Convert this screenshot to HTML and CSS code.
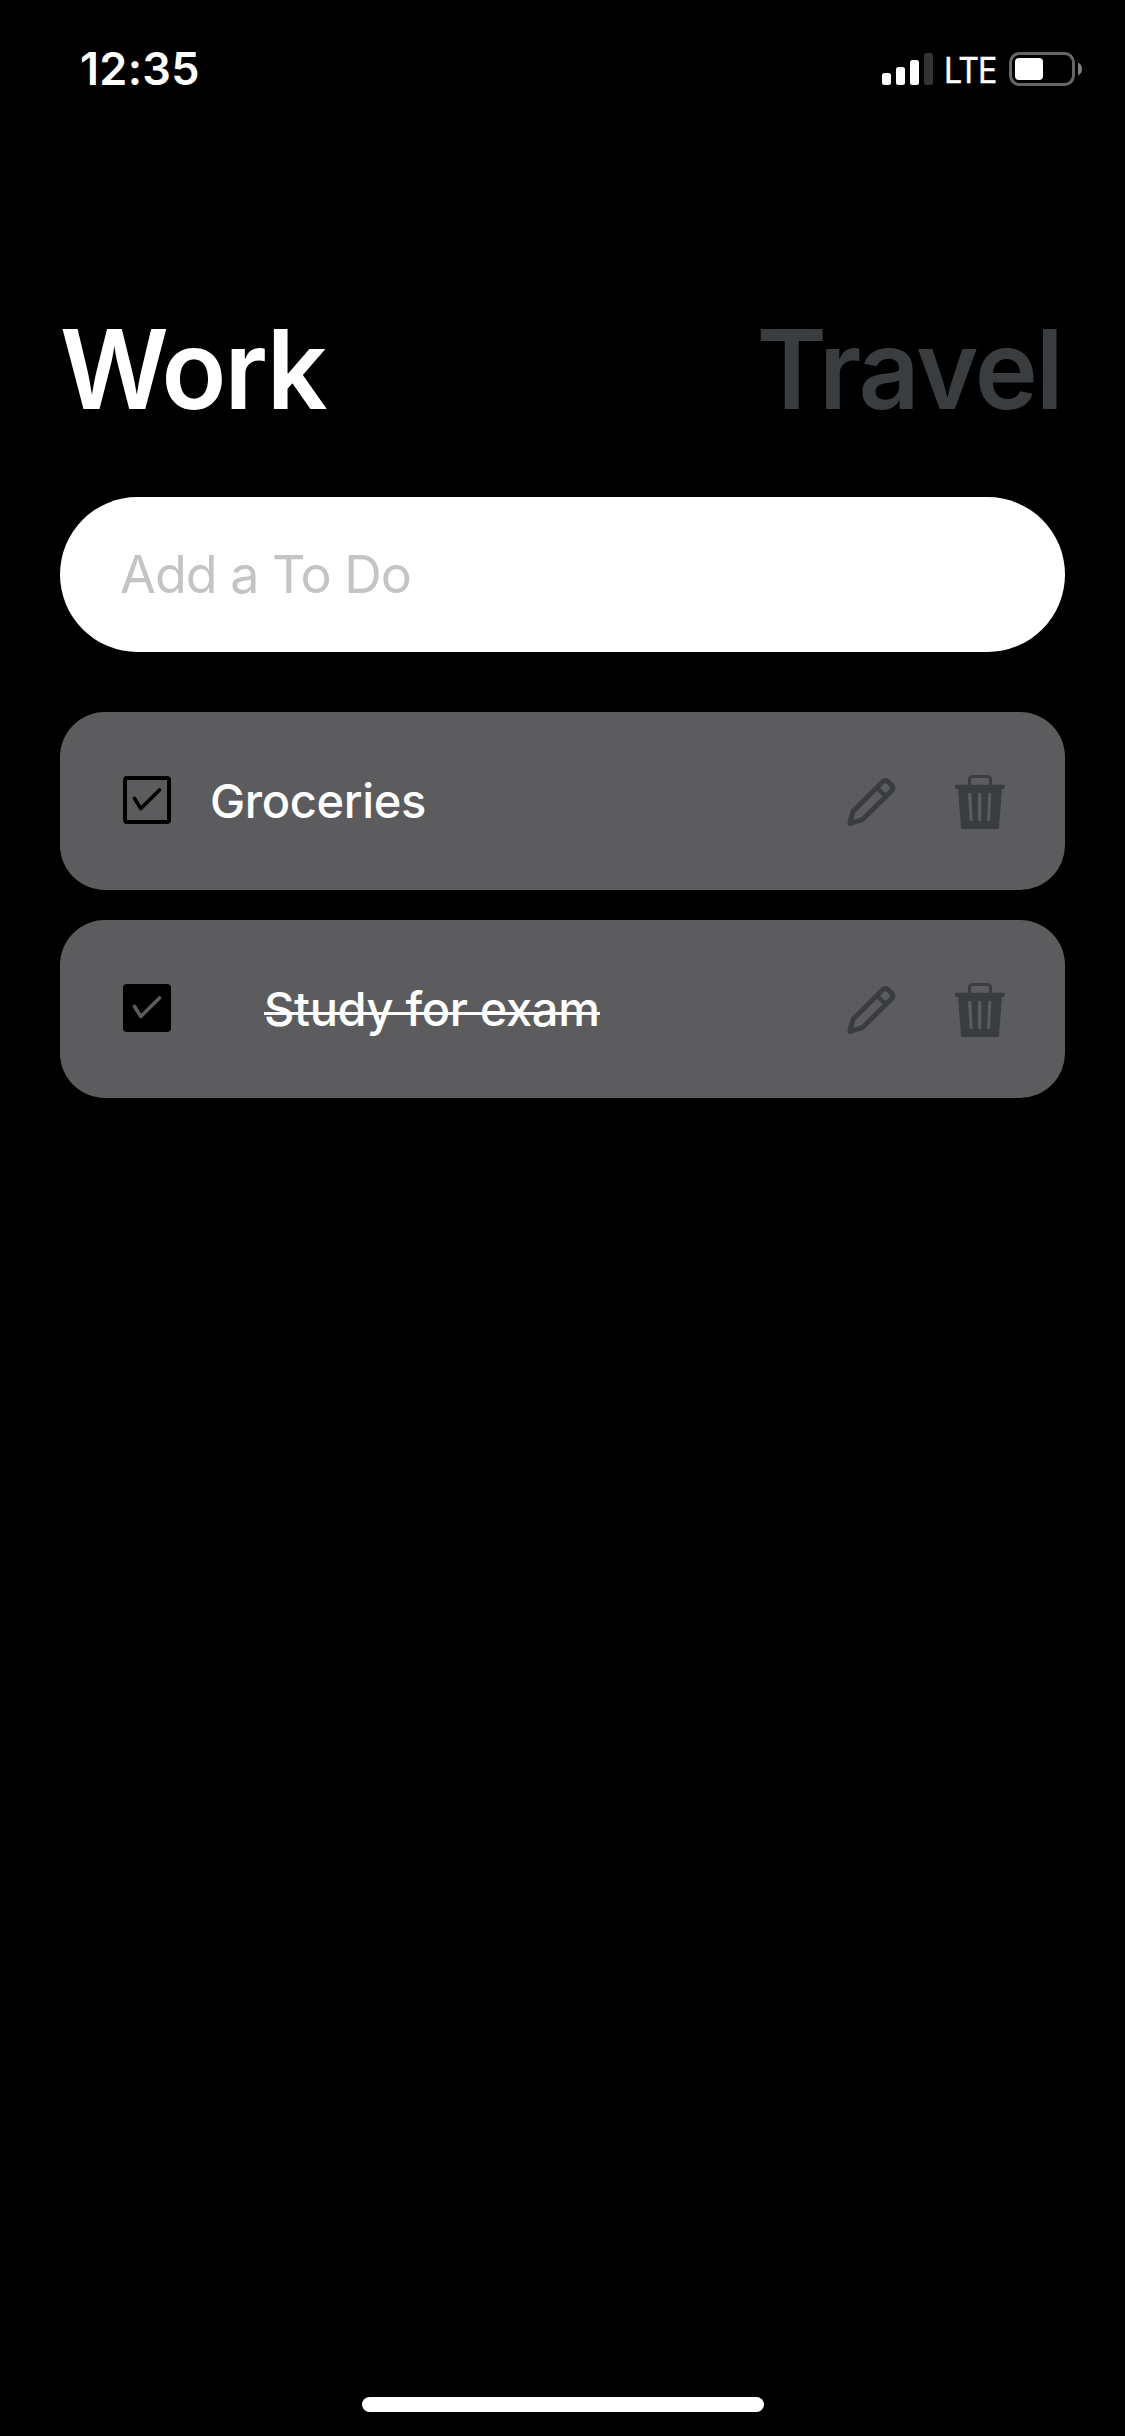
FILE: index.html
```html
<!DOCTYPE html>
<html lang="en">
<head>
<meta charset="utf-8">
<title>To Do</title>
<link rel="stylesheet" href="styles.css">
</head>
<body>
<svg class="defs" aria-hidden="true">
  <symbol id="pencil" viewBox="80 232 147 147">
    <g fill="none" stroke="currentColor" stroke-width="15" stroke-linejoin="round">
      <path d="M88.500 368.500 L98.500 331.500 L187 243 Q195 236 203 243 L214 254 Q221 262 214 270 L126 357 Z"/>
      <path d="M173 264 L193 284" stroke-width="13"/>
    </g>
  </symbol>
  <symbol id="trash" viewBox="405 225 150 162">
    <path fill="none" stroke="currentColor" stroke-width="9" d="M448.500 256 V240 Q448.500 229.500 459 229.500 H501 Q511.500 229.500 511.500 240 V256"/>
    <path fill="currentColor" fill-rule="evenodd" d="M405 254 H554 V266 H549 Q546 266 545.500 271 L537 383 Q536.500 387 533 387 H427 Q423.500 387 423 383 L414.500 271 Q414 266 410 266 H405 Z M444 280 L449 362 H458 L454 280 Z M474 280 V362 H484 V280 Z M505 280 L501 362 H510 L514 280 Z"/>
  </symbol>
</svg>
<div class="screen">
  <header class="status">
    <time class="clock">12:35</time>
    <div class="status-right">
      <svg class="signal" viewBox="0 0 51 32" fill="#fff">
        <rect x="0" y="20" width="9" height="12" rx="2.500"/>
        <rect x="14" y="14" width="9" height="18" rx="2.500"/>
        <rect x="28" y="7" width="9" height="25" rx="2.500"/>
        <rect x="42" y="0" width="9" height="32" rx="2.500" fill="#333"/>
      </svg>
      <span class="network">LTE</span>
      <svg class="battery" viewBox="0 0 73 34">
        <rect x="1.500" y="1.500" width="63" height="31" rx="9" fill="none" stroke="#666" stroke-width="3"/>
        <rect x="6" y="6" width="28" height="22" rx="4" fill="#fff"/>
        <path d="M69 10.500 Q73 12.500 73 17 Q73 21.500 69 23.500 Z" fill="#808080"/>
      </svg>
    </div>
  </header>
  <main class="content">
    <nav class="tabs">
      <button class="tab tab-active">Work</button>
      <button class="tab tab-travel">Travel</button>
    </nav>
    <input class="entry" type="text" placeholder="Add a To Do">
    <ul class="todos">
      <li class="todo">
        <svg class="check" viewBox="0 0 48 48" fill="none" stroke="#000" stroke-width="4">
          <rect x="2" y="2" width="44" height="44" rx="2"/>
          <path d="M11.500 22.500 L17.800 32.500 L36.500 14" stroke-linecap="round" stroke-linejoin="round" stroke-width="3.600"/>
        </svg>
        <span class="label">Groceries</span>
        <svg class="pencil"><use href="#pencil"/></svg>
        <svg class="trash"><use href="#trash"/></svg>
      </li>
      <li class="todo">
        <svg class="check" viewBox="0 0 48 48">
          <rect width="48" height="48" rx="4"/>
          <path d="M11.500 22.500 L17.800 32.500 L36.500 14" fill="none" stroke="#5c5c5e" stroke-linecap="round" stroke-linejoin="round" stroke-width="3.600"/>
        </svg>
        <span class="label label-done">Study for exam</span>
        <svg class="pencil"><use href="#pencil"/></svg>
        <svg class="trash"><use href="#trash"/></svg>
      </li>
    </ul>
  </main>
  <div class="home-bar"></div>
</div>
</body>
</html>
```
FILE: styles.css
```css
* {
  box-sizing: border-box;
}

body {
  margin: 0;
  background: #000;
  color: #fff;
  font-family: Inter, "Liberation Sans", sans-serif;
}

.defs {
  display: none;
}

.screen {
  display: flex;
  flex-direction: column;
  width: 1125px;
  height: 2436px;
  padding-bottom: 24px;
}

.status {
  display: flex;
  justify-content: space-between;
  align-items: center;
  height: 138px;
  padding: 0 43px 0 80px;
}

.clock {
  font-size: 45px;
  font-weight: 600;
  line-height: 54px;
  letter-spacing: 0.300px;
}

.status-right {
  display: flex;
  align-items: center;
}

.signal {
  width: 51px;
  height: 32px;
}

.network {
  width: 76px;
  padding: 2px 0 0 12px;
  font-size: 35px;
  line-height: 40px;
  letter-spacing: -1px;
  transform: scaleX(0.92);
  transform-origin: left;
  -webkit-text-stroke: 0.400px #fff;
}

.battery {
  width: 73px;
  height: 34px;
}

.content {
  flex: 1;
  padding: 160px 60px 0;
}

.tabs {
  display: flex;
  justify-content: space-between;
  height: 140px;
}

.tab {
  padding: 1px 0 0;
  border: 0;
  background: none;
  color: #3a3d40;
  font: 600 110px/140px Inter, "Liberation Sans", sans-serif;
  letter-spacing: -2px;
  transform: scaleX(0.97);
}

.tab-active {
  color: #fff;
  transform-origin: left;
}

.tab-travel {
  padding-right: 3px;
  transform-origin: right;
}

.entry {
  display: block;
  width: 100%;
  height: 155px;
  margin-top: 59px;
  padding: 0 60px;
  border: 0;
  border-radius: 78px;
  background: #fff;
  font: 400 52px/64px Inter, "Liberation Sans", sans-serif;
  letter-spacing: -1px;
}

.entry::placeholder {
  color: #c4c4c6;
  opacity: 1;
}

.todos {
  display: flex;
  flex-direction: column;
  gap: 30px;
  margin: 60px 0 0;
  padding: 0;
  list-style: none;
}

.todo {
  display: flex;
  align-items: center;
  height: 178px;
  padding: 0 60px 0 63px;
  border-radius: 45px;
  background: #5c5c5e;
  color: #3a3d40;
}

.check {
  width: 48px;
  height: 48px;
  margin-bottom: 2px;
}

.label {
  margin: 0 auto 0 39px;
  color: #fff;
  font-size: 47px;
  font-weight: 500;
  line-height: 60px;
  letter-spacing: -0.350px;
}

.label-done {
  position: relative;
  margin-left: 93px;
}

/* strike line, slightly below the font's own line-through position */
.label-done::after {
  content: "";
  position: absolute;
  top: 33px;
  left: 0;
  right: 0;
  height: 3px;
  background: #fff;
}

.pencil {
  width: 49px;
  height: 49px;
  margin-top: 2px;
}

.trash {
  width: 50px;
  height: 54px;
  margin: 2px 0 0 59px;
}

.home-bar {
  align-self: center;
  width: 402px;
  height: 15px;
  border-radius: 8px;
  background: #fff;
}
```
